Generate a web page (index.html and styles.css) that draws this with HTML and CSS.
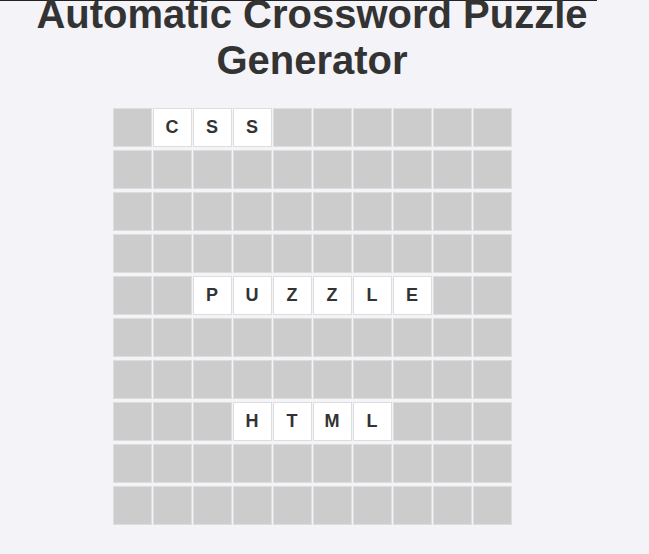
FILE: index.html
```html
<!DOCTYPE html>
<html lang="en">
<head>
<meta charset="utf-8">
<title>Automatic Crossword Puzzle Generator</title>
<link rel="stylesheet" href="styles.css">
</head>
<body>
<div class="topline"></div>
<main class="page">
  <h1 class="title">Automatic Crossword Puzzle Generator</h1>
  <div class="grid">
    <div class="cell"></div><div class="cell on">C</div><div class="cell on">S</div><div class="cell on">S</div><div class="cell"></div><div class="cell"></div><div class="cell"></div><div class="cell"></div><div class="cell"></div><div class="cell"></div>
    <div class="cell"></div><div class="cell"></div><div class="cell"></div><div class="cell"></div><div class="cell"></div><div class="cell"></div><div class="cell"></div><div class="cell"></div><div class="cell"></div><div class="cell"></div>
    <div class="cell"></div><div class="cell"></div><div class="cell"></div><div class="cell"></div><div class="cell"></div><div class="cell"></div><div class="cell"></div><div class="cell"></div><div class="cell"></div><div class="cell"></div>
    <div class="cell"></div><div class="cell"></div><div class="cell"></div><div class="cell"></div><div class="cell"></div><div class="cell"></div><div class="cell"></div><div class="cell"></div><div class="cell"></div><div class="cell"></div>
    <div class="cell"></div><div class="cell"></div><div class="cell on">P</div><div class="cell on">U</div><div class="cell on">Z</div><div class="cell on">Z</div><div class="cell on">L</div><div class="cell on">E</div><div class="cell"></div><div class="cell"></div>
    <div class="cell"></div><div class="cell"></div><div class="cell"></div><div class="cell"></div><div class="cell"></div><div class="cell"></div><div class="cell"></div><div class="cell"></div><div class="cell"></div><div class="cell"></div>
    <div class="cell"></div><div class="cell"></div><div class="cell"></div><div class="cell"></div><div class="cell"></div><div class="cell"></div><div class="cell"></div><div class="cell"></div><div class="cell"></div><div class="cell"></div>
    <div class="cell"></div><div class="cell"></div><div class="cell"></div><div class="cell on">H</div><div class="cell on">T</div><div class="cell on">M</div><div class="cell on">L</div><div class="cell"></div><div class="cell"></div><div class="cell"></div>
    <div class="cell"></div><div class="cell"></div><div class="cell"></div><div class="cell"></div><div class="cell"></div><div class="cell"></div><div class="cell"></div><div class="cell"></div><div class="cell"></div><div class="cell"></div>
    <div class="cell"></div><div class="cell"></div><div class="cell"></div><div class="cell"></div><div class="cell"></div><div class="cell"></div><div class="cell"></div><div class="cell"></div><div class="cell"></div><div class="cell"></div>
  </div>
</main>
</body>
</html>
```
FILE: styles.css
```css
html, body {
  margin: 0;
  padding: 0;
  background: #f4f4f8;
}
body {
  font-family: "Liberation Sans", Arial, sans-serif;
  color: #333;
  overflow: hidden;
}
.topline {
  width: 597px;
  height: 1px;
  background: #222;
}
.page {
  width: 624px;
  display: flex;
  flex-direction: column;
  align-items: center;
}
.title {
  margin: -10px 0 0;
  font-size: 40px;
  font-weight: bold;
  text-align: center;
  color: #333;
  line-height: 46px;
}
.grid {
  margin-top: 25px;
  display: grid;
  grid-template-columns: repeat(10, 39px);
  grid-auto-rows: 39px;
  column-gap: 1px;
  row-gap: 3px;
}
.cell {
  box-sizing: border-box;
  border: 1px solid #ddd;
  background: #ccc;
  display: flex;
  align-items: center;
  justify-content: center;
  font-size: 18px;
  font-weight: bold;
  color: #333;
}
.cell.on {
  background: #fff;
}
```
